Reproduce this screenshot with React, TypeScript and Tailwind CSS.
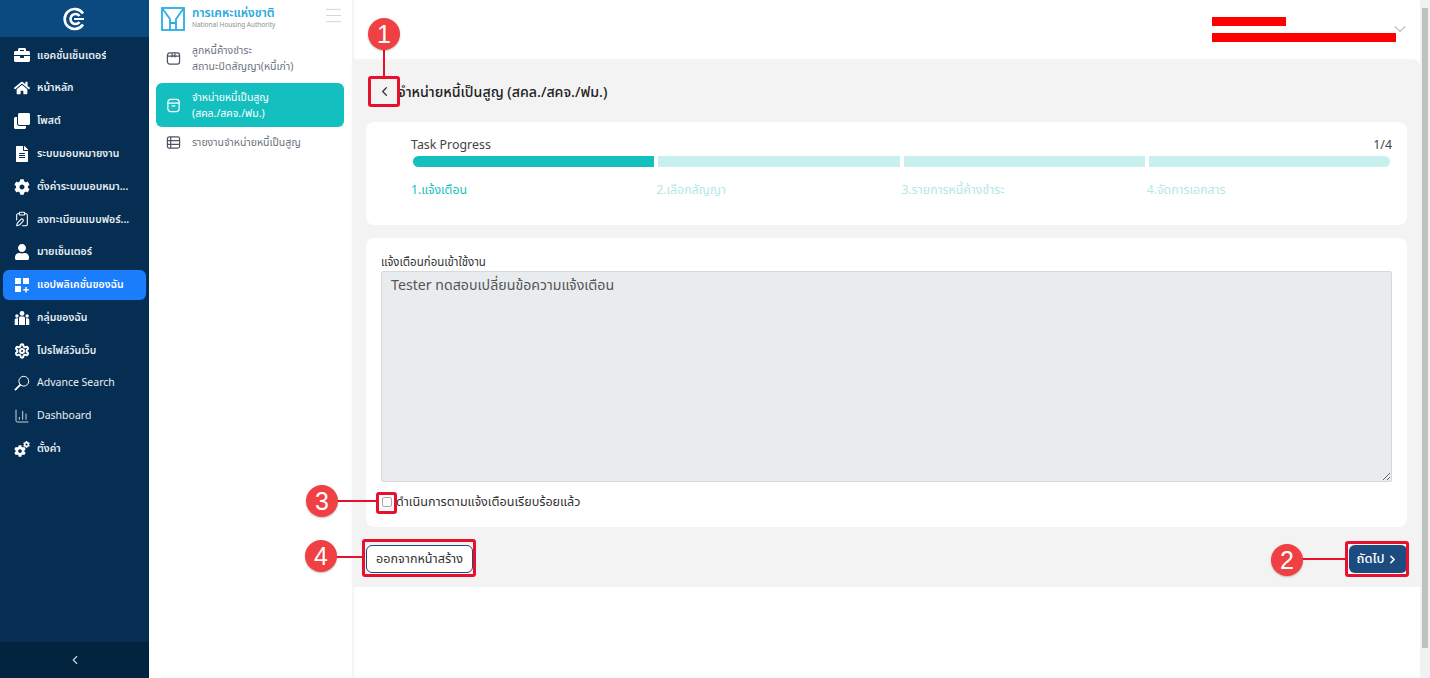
import type { ComponentType } from "react";
import { ChevronDown, ChevronLeft, ChevronRight, Menu } from "lucide-react";
import { FaBriefcase, FaClone, FaCog, FaFileAlt, FaHome, FaUser } from "react-icons/fa";
import { LuChartColumn, LuClipboardPen, LuSettings } from "react-icons/lu";

type IconProps = { className?: string };

function AppsIcon({ className }: IconProps) {
  return (
    <svg viewBox="0 0 16 16" className={className} fill="currentColor">
      <rect x="1" y="1" width="6" height="6" />
      <rect x="9" y="1" width="6" height="6" />
      <rect x="1" y="9" width="6" height="6" />
      <path d="M11.3 10h1.4v2h2v1.4h-2v2h-1.4v-2h-2V12h2z" />
    </svg>
  );
}

function GroupIcon({ className }: IconProps) {
  return (
    <svg viewBox="0 0 16 16" className={className} fill="currentColor">
      <circle cx="8" cy="3.4" r="2.4" />
      <circle cx="2.9" cy="6" r="1.7" />
      <circle cx="13.1" cy="6" r="1.7" />
      <path d="M5 8.2c0-1 .8-1.7 1.7-1.7h2.6c.9 0 1.7.7 1.7 1.7V15H5z" />
      <path d="M.7 10c0-1 .8-1.8 1.7-1.8H4V15H.7zM12 8.2h1.6c.9 0 1.7.8 1.7 1.8v5H12z" />
    </svg>
  );
}

function GearPair({ className }: IconProps) {
  return (
    <span className={`relative block ${className}`}>
      <FaCog className="absolute bottom-0 left-0 h-[12px] w-[12px]" />
      <FaCog className="absolute right-0 top-0 h-[7px] w-[7px]" />
    </span>
  );
}

function ThickGear({ className }: IconProps) {
  return <LuSettings className={className} strokeWidth={3} />;
}

function MirroredSearch({ className }: IconProps) {
  return (
    <svg viewBox="0 0 16 16" className={className} fill="none" stroke="currentColor">
      <circle cx="9.8" cy="6.2" r="4.9" strokeWidth="1" />
      <path d="M6.2 9.8 1.4 14.6" strokeWidth="1.8" strokeLinecap="round" />
    </svg>
  );
}

function ThinChart({ className }: IconProps) {
  return <LuChartColumn className={className} strokeWidth={1.2} />;
}

function FormIcon({ className }: IconProps) {
  return <LuClipboardPen className={className} strokeWidth={1.6} />;
}

const menu: { label: string; Icon: ComponentType<IconProps>; active?: boolean; light?: boolean }[] = [
  { label: "แอคชั่นเซ็นเตอร์", Icon: FaBriefcase },
  { label: "หน้าหลัก", Icon: FaHome },
  { label: "โพสต์", Icon: FaClone },
  { label: "ระบบมอบหมายงาน", Icon: FaFileAlt },
  { label: "ตั้งค่าระบบมอบหมา...", Icon: FaCog },
  { label: "ลงทะเบียนแบบฟอร์...", Icon: FormIcon },
  { label: "มายเซ็นเตอร์", Icon: FaUser },
  { label: "แอปพลิเคชั่นของฉัน", Icon: AppsIcon, active: true },
  { label: "กลุ่มของฉัน", Icon: GroupIcon },
  { label: "โปรไฟล์วันเว็บ", Icon: ThickGear },
  { label: "Advance Search", Icon: MirroredSearch, light: true },
  { label: "Dashboard", Icon: ThinChart, light: true },
  { label: "ตั้งค่า", Icon: GearPair },
];

const steps = [
  { label: "1.แจ้งเตือน", done: true },
  { label: "2.เลือกสัญญา" },
  { label: "3.รายการหนี้ค้างชำระ" },
  { label: "4.จัดการเอกสาร" },
];

function Marker({ n, className }: { n: number; className: string }) {
  return (
    <span
      className={`absolute flex h-8 w-8 items-center justify-center rounded-full bg-[#f04043] font-['Liberation_Sans',sans-serif] text-[25px] leading-none text-white shadow-[0_1px_2px_rgba(0,0,0,0.25)] ${className}`}
    >
      {n}
    </span>
  );
}

function NhaLogo() {
  return (
    <svg viewBox="0 0 24 24" className="h-[24px] w-[24px] shrink-0" fill="none" stroke="#29aee3" strokeWidth="1.8">
      <rect x="1" y="1" width="22" height="22" />
      <path d="M1 1 9 12v11M23 1l-8 11v11M9 16h6" />
    </svg>
  );
}

function BoxIcon({ className }: IconProps) {
  return (
    <svg viewBox="0 0 16 16" className={className} fill="none" stroke="currentColor" strokeWidth="1.3">
      <rect x="1.5" y="2" width="13" height="12" rx="2.5" />
      <path d="M1.5 5.5h13M6.5 2.5v3.5l1.5-1 1.5 1V2.5" />
    </svg>
  );
}

function ArchiveIcon({ className }: IconProps) {
  return (
    <svg viewBox="0 0 16 16" className={className} fill="none" stroke="currentColor" strokeWidth="1.3">
      <rect x="2" y="1.5" width="12" height="13" rx="3" />
      <path d="M2 5.5h12M6.5 8.5h3" strokeLinecap="round" />
    </svg>
  );
}

function RowsIcon({ className }: IconProps) {
  return (
    <svg viewBox="0 0 16 16" className={className} fill="none" stroke="currentColor" strokeWidth="1.3">
      <rect x="1.5" y="2" width="13" height="12" rx="2" />
      <path d="M1.5 6h13M1.5 10h13M5 2v12" />
    </svg>
  );
}

export default function App() {
  return (
    <div className="relative flex h-[678px] w-[1430px] overflow-hidden bg-white font-['Noto_Sans','Noto_Sans_Thai',sans-serif] text-[#333]">
      <aside className="flex w-[149px] shrink-0 flex-col bg-[#052e52] text-[#e8eef4]">
        <div className="flex h-[37px] items-center justify-center bg-[#0b4a80]">
          <svg viewBox="0 0 24 24" className="h-[24px] w-[24px]" fill="none" stroke="white" strokeWidth="2.6">
            <path d="M20 6.5A10 10 0 1 0 20 17.5" />
            <path d="M16.5 9a5 5 0 1 0 0 6" />
            <path d="M11 12h10" strokeWidth="2" />
          </svg>
        </div>
        <nav className="flex-1 px-[3px] pt-[2px]">
          {menu.map(({ label, Icon, active, light }) => (
            <div key={label} className="flex h-[32.8px] items-center">
              <div
                className={`flex h-[30px] w-full items-center gap-[7px] rounded-md pl-[11px] text-[10.5px] ${
                  active ? "bg-[#1a7dfb] text-white" : ""
                } ${light ? "font-normal" : "font-semibold"}`}
              >
                <Icon className="h-[16px] w-[16px] shrink-0 text-white" />
                <span className="truncate">{label}</span>
              </div>
            </div>
          ))}
        </nav>
        <div className="flex h-[36px] items-center justify-center bg-[#03243f]">
          <ChevronLeft className="h-[14px] w-[14px] text-[#c9d5e0]" />
        </div>
      </aside>

      <aside className="w-[203px] shrink-0 bg-white pl-[7px] pr-[8px] text-[10.5px] text-[#6b7280] shadow-[1px_0_3px_rgba(0,0,0,0.08)]">
        <div className="flex h-[38px] items-center gap-[7px] pl-[5px]">
          <NhaLogo />
          <div className="flex-1 leading-[12px]">
            <div className="text-[12px] font-semibold text-[#2aa9e0]">การเคหะแห่งชาติ</div>
            <div className="text-[6.5px] text-[#8a8f98]">National Housing Authority</div>
          </div>
          <Menu className="-mt-[8px] h-[21px] w-[21px] text-[#d0d3d8]" strokeWidth={1.1} />
        </div>
        <div className="flex h-[45px] items-center gap-[11px] pb-[5px] pl-[10px] leading-[16px]">
          <BoxIcon className="h-[15px] w-[15px] shrink-0 text-[#4b5563]" />
          <div>
            ลูกหนี้ค้างชำระ
            <br />
            สถานะปิดสัญญา(หนี้เก่า)
          </div>
        </div>
        <div className="flex h-[44px] items-center gap-[11px] rounded-md bg-[#14bfbf] pl-[10px] leading-[16px] text-white">
          <ArchiveIcon className="h-[15px] w-[15px] shrink-0" />
          <div>
            จำหน่ายหนี้เป็นสูญ
            <br />
            (สคล./สคจ./ฟม.)
          </div>
        </div>
        <div className="flex h-[31px] items-center gap-[11px] pl-[10px]">
          <RowsIcon className="h-[15px] w-[15px] shrink-0 text-[#4b5563]" />
          <div>รายงานจำหน่ายหนี้เป็นสูญ</div>
        </div>
      </aside>

      <main className="flex min-w-0 flex-1 flex-col">
        <header className="flex h-[60px] shrink-0 items-start justify-end pr-[10px] pt-[17px]">
          <div className="flex flex-col gap-[7px]">
            <div className="h-[9px] w-[74px] bg-[#ff0000]" />
            <div className="h-[9px] w-[184px] bg-[#ff0000]" />
          </div>
          <ChevronDown className="-ml-[6px] mt-[2px] h-[20px] w-[20px] text-[#bfc1c5]" strokeWidth={1.3} />
        </header>
        <section className="h-[527px] rounded-tr-lg bg-[#f3f3f3] pl-[14px] pr-[13px] shadow-[0_-1px_2px_rgba(0,0,0,0.05)]">
          <div className="flex h-[62px] items-center gap-[4px] pl-[11px] pt-[1px]">
            <ChevronLeft className="h-[15px] w-[15px] text-[#333]" />
            <h1 className="ml-[2px] text-[14.2px] font-medium text-[#222]">จำหน่ายหนี้เป็นสูญ (สคล./สคจ./ฟม.)</h1>
          </div>
          <div className="h-[103px] rounded-lg bg-white px-[15px] pt-[15px]">
            <div className="flex items-center justify-between pl-[30px] text-[12.4px] leading-[15px] text-[#444]">
              <span>Task Progress</span>
              <span>1/4</span>
            </div>
            <div className="mt-[4px] grid grid-cols-4 gap-[4px] pl-[32px] pr-[2px]">
              {steps.map((step, i) => (
                <div key={step.label}>
                  <div
                    className={`h-[11px] ${step.done ? "bg-[#14bfbf]" : "bg-[#c8f0ee]"} ${i === 0 ? "rounded-l-full" : ""} ${
                      i === 3 ? "rounded-r-full" : ""
                    }`}
                  />
                  <div
                    className={`-ml-[2px] mt-[15px] text-[12.3px] leading-[16px] ${
                      step.done ? "text-[#14bfbf]" : "text-[#b3e8e6]"
                    }`}
                  >
                    {step.label}
                  </div>
                </div>
              ))}
            </div>
          </div>
          <div className="mt-[13px] h-[289px] rounded-lg bg-white px-[15px] pt-[15px]">
            <label className="block text-[11.5px] leading-[18px] text-[#333]">แจ้งเตือนก่อนเข้าใช้งาน</label>
            <textarea
              readOnly
              value="Tester ทดสอบเปลี่ยนข้อความแจ้งเตือน"
              className="block h-[211px] w-full rounded-[2px] border border-[#d6d9dc] bg-[#e9ecef] px-[9px] py-[2px] text-[14.2px] text-[#555]"
            />
            <div className="mt-[11px] flex items-center gap-[4px] text-[12.6px] text-[#333]">
              <span className="ml-[1px] h-[10px] w-[10px] rounded-[2px] border border-[#a8a8a8] bg-white" />
              <span>ดำเนินการตามแจ้งเตือนเรียบร้อยแล้ว</span>
            </div>
          </div>
          <div className="mt-[18px] flex items-center justify-between">
            <button className="h-[28px] w-[107px] rounded-md border border-[#1c4b80] bg-white text-[12.6px] text-[#333]">
              ออกจากหน้าสร้าง
            </button>
            <button className="flex h-[28px] w-[58px] items-center justify-center gap-[2px] rounded-md bg-[#1c4b80] text-[13px] font-medium text-white">
              ถัดไป
              <ChevronRight className="h-[13px] w-[13px]" strokeWidth={3} />
            </button>
          </div>
        </section>
      </main>

      <div className="w-[10px] shrink-0 bg-[#f1f1f1] pt-[8px]">
        <div className="mx-auto h-[640px] w-[6px] bg-[#c1c1c1]" />
      </div>

      {/* red callouts drawn over the screenshot */}
      <span className="absolute left-[383px] top-[48px] h-[30px] w-[2px] bg-[#e8112d]" />
      <span className="absolute left-[368px] top-[76px] h-[31px] w-[32px] rounded-[3px] border-[3px] border-[#e8112d]" />
      <Marker n={1} className="left-[368px] top-[18px]" />
      <span className="absolute left-[336px] top-[500px] h-[2px] w-[41px] bg-[#e8112d]" />
      <span className="absolute left-[376px] top-[492px] h-[22px] w-[21px] rounded-[3px] border-[3px] border-[#e8112d]" />
      <Marker n={3} className="left-[306px] top-[485px]" />
      <span className="absolute left-[335px] top-[556px] h-[2px] w-[28px] bg-[#e8112d]" />
      <span className="absolute left-[362px] top-[539px] h-[38px] w-[114px] rounded-[3px] border-[3px] border-[#e8112d]" />
      <Marker n={4} className="left-[305px] top-[540px]" />
      <span className="absolute left-[1300px] top-[558px] h-[2px] w-[46px] bg-[#e8112d]" />
      <span className="absolute left-[1345px] top-[541px] h-[36px] w-[64px] rounded-[3px] border-[3px] border-[#e8112d]" />
      <Marker n={2} className="left-[1271px] top-[544px]" />
    </div>
  );
}
